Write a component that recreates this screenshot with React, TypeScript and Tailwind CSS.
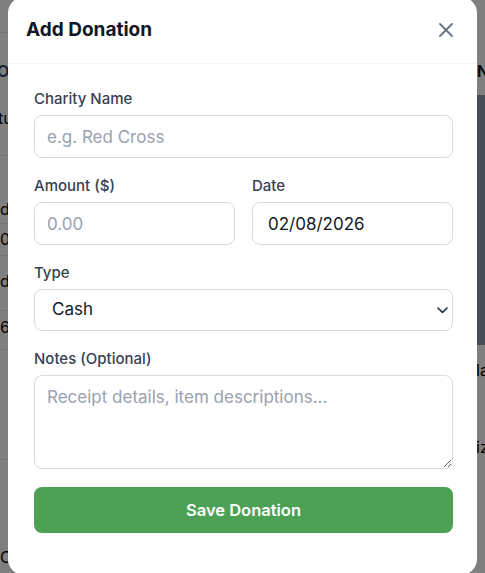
import React from 'react';

function ChevronDown() {
  return (
    <svg width="11" height="7" viewBox="0 0 11 7" fill="none" className="text-gray-800">
      <path d="M1 1l4.5 4.5L10 1" stroke="currentColor" strokeWidth="1.6" strokeLinecap="round" strokeLinejoin="round" />
    </svg>
  );
}

function CloseIcon() {
  return (
    <svg width="16" height="16" viewBox="0 0 16 16" fill="none">
      <path d="M2 2l12 12M14 2L2 14" stroke="currentColor" strokeWidth="1.8" strokeLinecap="round" />
    </svg>
  );
}

// page behind the dialog, only its edges peek out
function BackgroundPage() {
  return (
    <div className="flex h-full w-full bg-white text-base text-black">
      <div className="w-2 shrink-0 overflow-hidden">
        <div className="h-[33px] border-b border-gray-200" />
        <div className="mt-[26px] -ml-[3px] h-[24px] font-semibold leading-[24px] text-gray-700">Ol</div>
        <div className="mt-[23px] -ml-[2px] h-[24px] leading-[24px]">tus</div>
        <div className="h-[26px] border-b border-gray-200" />
        <div className="mt-[41px] h-[24px] leading-[24px]">d</div>
        <div className="h-[3px] border-b border-gray-200" />
        <div className="mt-[3px] h-[24px] leading-[24px]">0</div>
        <div className="h-[5px] border-b border-gray-200" />
        <div className="mt-[13px] h-[24px] leading-[24px]">du</div>
        <div className="h-[18px] border-b border-gray-200" />
        <div className="mt-[4px] h-[24px] leading-[24px]">6</div>
        <div className="h-[11px] border-b border-gray-200" />
        <div className="h-[110px] border-b border-gray-200" />
        <div className="mt-[85px] h-[24px] leading-[24px]">C</div>
      </div>
      <div className="flex-1" />
      <div className="w-2 shrink-0 overflow-hidden">
        <div className="h-[60px]" />
        <div className="h-[22px] font-semibold leading-[22px]">N</div>
        <div className="mt-[13px] h-[250px] bg-[#8e98aa]" />
        <div className="mt-[14px] -ml-[1px] h-[22px] leading-[22px]">la</div>
        <div className="mt-[55px] -ml-[1px] h-[22px] leading-[22px]">iz</div>
      </div>
    </div>
  );
}

export default function App() {
  return (
    <div className="relative h-[573px] w-full overflow-hidden font-['Inter','Noto_Sans',sans-serif]">
      <BackgroundPage />
      <div className="absolute inset-0 bg-black/50" />

      <div className="absolute left-2 top-[-3px] flex h-[578px] w-[469px] flex-col rounded-2xl bg-white">
        <div className="flex items-center justify-between border-b border-gray-100 py-[19px] pl-[18px] pr-[23px]">
          <h2 className="text-[19px] font-bold leading-7 text-gray-900">Add Donation</h2>
          <button className="text-gray-500">
            <CloseIcon />
          </button>
        </div>

        <form className="flex flex-col gap-[18px] pb-10 pl-[26px] pr-6 pt-[25px]">
          <div>
            <label className="mb-1.5 block text-[15px] font-medium leading-5 text-gray-700">Charity Name</label>
            <input
              type="text"
              placeholder="e.g. Red Cross"
              className="h-[43px] w-full rounded-lg border border-[#d8dbe0] px-3 text-[17px] text-gray-900 placeholder:text-gray-400 outline-none"
            />
          </div>

          <div className="grid grid-cols-2 gap-[17px]">
            <div>
              <label className="mb-1.5 block text-[15px] font-medium leading-5 text-gray-700">Amount ($)</label>
              <input
                type="text"
                placeholder="0.00"
                className="h-[43px] w-full rounded-lg border border-[#d8dbe0] px-3 text-[17px] text-gray-900 placeholder:text-gray-400 outline-none"
              />
            </div>
            <div>
              <label className="mb-1.5 block text-[15px] font-medium leading-5 text-gray-700">Date</label>
              <input
                type="text"
                defaultValue="02/08/2026"
                className="h-[43px] w-full rounded-lg border border-[#d8dbe0] px-[15px] text-[17px] text-gray-900 outline-none"
              />
            </div>
          </div>

          <div>
            <label className="mb-1.5 block text-[15px] font-medium leading-5 text-gray-700">Type</label>
            <div className="relative">
              <select className="h-[42px] w-full appearance-none rounded-lg border border-[#d8dbe0] bg-white pl-[17px] text-[17px] text-gray-900 outline-none">
                <option>Cash</option>
                <option>Goods</option>
                <option>Check</option>
              </select>
              <div className="pointer-events-none absolute right-[5px] top-[18px]">
                <ChevronDown />
              </div>
            </div>
          </div>

          <div>
            <label className="mb-1.5 block text-[15px] font-medium leading-5 text-gray-700">Notes (Optional)</label>
            <textarea
              placeholder="Receipt details, item descriptions..."
              className="block h-[94px] w-full rounded-lg border border-[#d8dbe0] px-3 pb-2 pt-[9px] text-[17px] leading-6 text-gray-900 placeholder:text-gray-400 outline-none"
            />
          </div>

          <button
            type="button"
            className="h-[46px] w-full rounded-lg bg-[#4ca154] text-[16.5px] font-semibold text-white"
          >
            Save Donation
          </button>
        </form>
      </div>
    </div>
  );
}
